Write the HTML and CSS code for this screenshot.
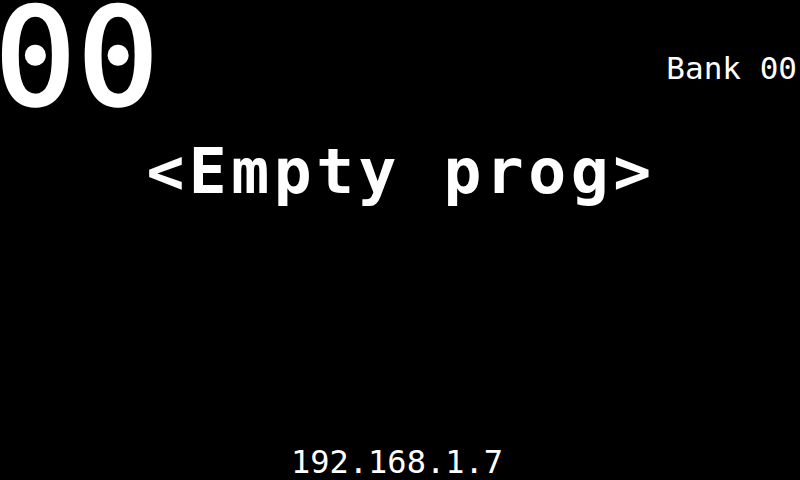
FILE: index.html
```html
<!DOCTYPE html>
<html>
<head>
<meta charset="utf-8">
<link rel="stylesheet" href="styles.css">
</head>
<body>
<div class="screen">
  <div class="top">
    <div class="prog-num">00</div>
    <div class="bank">Bank 00</div>
  </div>
  <div class="title">&lt;Empty prog&gt;</div>
  <div class="ip">192.168.1.7</div>
</div>
</body>
</html>
```
FILE: styles.css
```css
html, body {
  margin: 0;
  padding: 0;
  background: #000;
}
.screen {
  width: 800px;
  height: 480px;
  overflow: hidden;
  display: flex;
  flex-direction: column;
  color: #fff;
  font-family: "DejaVu Sans Mono", monospace;
  line-height: 1;
}
.top {
  height: 140px;
  display: flex;
  justify-content: space-between;
  align-items: flex-start;
}
.prog-num {
  font-size: 134px;
  line-height: 0.88;
  -webkit-text-stroke: 3.5px #fff;
  letter-spacing: 2px;
  margin-left: -5px;
}
.bank {
  font-size: 31px;
  margin-top: 53px;
  margin-right: 3px;
}
.title {
  font-size: 63px;
  font-weight: bold;
  letter-spacing: 4.5px;
  text-align: center;
  padding-left: 2px;
}
.ip {
  margin-top: auto;
  font-size: 32px;
  text-align: center;
  padding-bottom: 2px;
  padding-right: 6px;
}
```
